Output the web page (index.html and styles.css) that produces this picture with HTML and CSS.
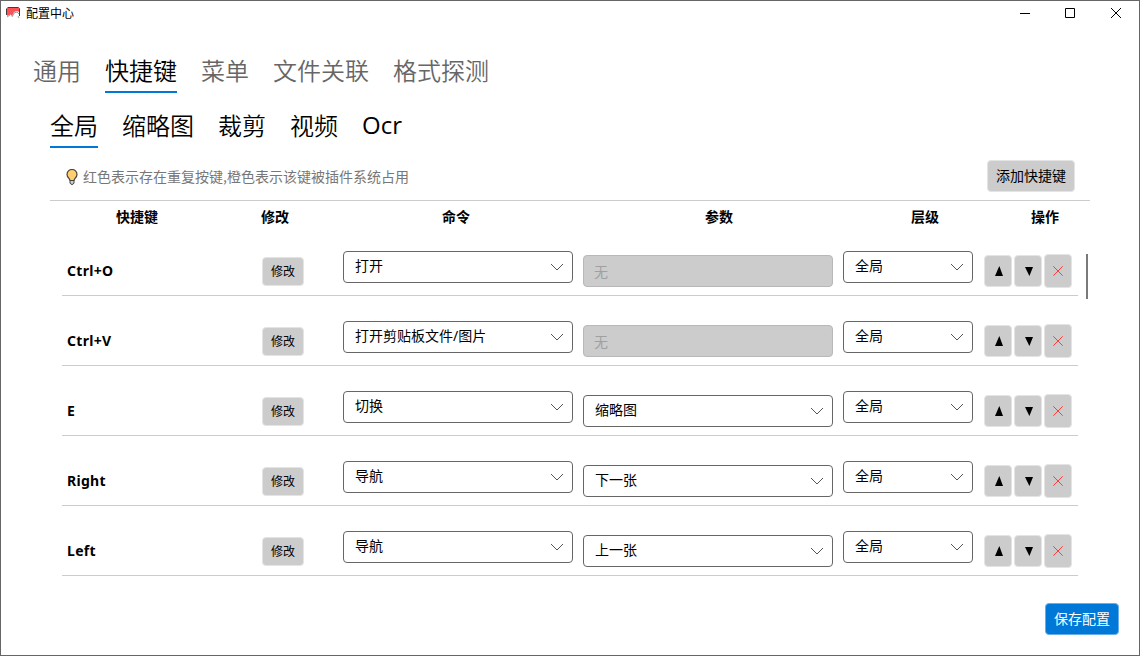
FILE: index.html
```html
<!DOCTYPE html>
<html lang="zh-CN">
<head>
<meta charset="utf-8">
<title>配置中心</title>
<link rel="stylesheet" href="styles.css">
</head>
<body>
<svg class="defs" width="0" height="0">
  <symbol id="chev" viewBox="0 0 14 8"><path d="M1 1 L7 7 L13 1" fill="none" stroke="#555" stroke-width="1"/></symbol>
  <symbol id="up" viewBox="0 0 8 10"><path d="M4.3 0 L8 10 H0 Z"/></symbol>
  <symbol id="down" viewBox="0 0 8 9"><path d="M0 0 H8 L4.4 9 Z"/></symbol>
  <symbol id="del" viewBox="0 0 10 10"><path d="M0.3 0.3 L9.7 9.7 M9.7 0.3 L0.3 9.7" fill="none" stroke="#ff3b3b" stroke-width="1"/></symbol>
</svg>
<div class="window">
  <header class="titlebar">
    <svg class="logo" width="14" height="12" viewBox="0 0 14 12"><path d="M1 1 H13 V5 L11 4 L8 5 L6 9 L4.5 7.5 L1 9 Z" fill="#fb5258"/><path d="M1.5 .5 H12.5 L13.5 1.5 V9 M.5 1.5 V8" fill="none" stroke="#49363a"/><path d="M1 10 L4 8 M6 10 L8 6 L11 5 L13 7 M12 9 L13 11" fill="none" stroke="#77706f" stroke-width=".7"/></svg>
    <span class="title">配置中心</span>
    <svg class="winctl" width="102" height="12" viewBox="0 0 102 12" fill="none" stroke="#000"><path d="M0 6.5 H10 M45.5 1.5 H54.5 V10.5 H45.5 Z M91 1 L101 11 M101 1 L91 11"/></svg>
  </header>
  <nav class="tabs main-tabs">
    <a class="tab">通用</a><a class="tab active">快捷键</a><a class="tab">菜单</a><a class="tab">文件关联</a><a class="tab">格式探测</a>
  </nav>
  <nav class="tabs sub-tabs">
    <a class="tab active">全局</a><a class="tab">缩略图</a><a class="tab">裁剪</a><a class="tab">视频</a><a class="tab latin">Ocr</a>
  </nav>
  <div class="tipbar">
    <svg width="12" height="16" viewBox="0 0 12 16"><path d="M4 11.5 C4 9.5 1 8.5 1 5.4 A5 4.9 0 0 1 11 5.4 C11 8.5 8 9.5 8 11.5 Z" fill="#ffcf70" stroke="#4a4238" stroke-width="1.2"/><path d="M4 11.5 H8 V14 L7 15.3 H5 L4 14 Z" fill="#ccc" stroke="#444"/></svg>
    <span class="tip">红色表示存在重复按键,橙色表示该键被插件系统占用</span>
    <button class="btn add">添加快捷键</button>
  </div>
  <div class="thead">
    <span>快捷键</span><span>修改</span><span>命令</span><span>参数</span><span>层级</span><span>操作</span>
  </div>
  <div class="list">
    <div class="rows">
      <div class="row">
        <b class="key">Ctrl+O</b><button class="btn edit">修改</button>
        <div class="select">打开<svg><use href="#chev"/></svg></div>
        <div class="input">无</div>
        <div class="select">全局<svg><use href="#chev"/></svg></div>
        <div class="ops"><button class="btn op"><svg class="up"><use href="#up"/></svg></button><button class="btn op"><svg class="down"><use href="#down"/></svg></button><button class="btn op del"><svg><use href="#del"/></svg></button></div>
      </div>
      <div class="row">
        <b class="key">Ctrl+V</b><button class="btn edit">修改</button>
        <div class="select">打开剪贴板文件/图片<svg><use href="#chev"/></svg></div>
        <div class="input">无</div>
        <div class="select">全局<svg><use href="#chev"/></svg></div>
        <div class="ops"><button class="btn op"><svg class="up"><use href="#up"/></svg></button><button class="btn op"><svg class="down"><use href="#down"/></svg></button><button class="btn op del"><svg><use href="#del"/></svg></button></div>
      </div>
      <div class="row">
        <b class="key">E</b><button class="btn edit">修改</button>
        <div class="select">切换<svg><use href="#chev"/></svg></div>
        <div class="select param">缩略图<svg><use href="#chev"/></svg></div>
        <div class="select">全局<svg><use href="#chev"/></svg></div>
        <div class="ops"><button class="btn op"><svg class="up"><use href="#up"/></svg></button><button class="btn op"><svg class="down"><use href="#down"/></svg></button><button class="btn op del"><svg><use href="#del"/></svg></button></div>
      </div>
      <div class="row">
        <b class="key">Right</b><button class="btn edit">修改</button>
        <div class="select">导航<svg><use href="#chev"/></svg></div>
        <div class="select param">下一张<svg><use href="#chev"/></svg></div>
        <div class="select">全局<svg><use href="#chev"/></svg></div>
        <div class="ops"><button class="btn op"><svg class="up"><use href="#up"/></svg></button><button class="btn op"><svg class="down"><use href="#down"/></svg></button><button class="btn op del"><svg><use href="#del"/></svg></button></div>
      </div>
      <div class="row">
        <b class="key">Left</b><button class="btn edit">修改</button>
        <div class="select">导航<svg><use href="#chev"/></svg></div>
        <div class="select param">上一张<svg><use href="#chev"/></svg></div>
        <div class="select">全局<svg><use href="#chev"/></svg></div>
        <div class="ops"><button class="btn op"><svg class="up"><use href="#up"/></svg></button><button class="btn op"><svg class="down"><use href="#down"/></svg></button><button class="btn op del"><svg><use href="#del"/></svg></button></div>
      </div>
    </div>
    <div class="thumb"></div>
  </div>
  <footer class="footer"><button class="btn save">保存配置</button></footer>
</div>
</body>
</html>
```
FILE: styles.css
```css
* { box-sizing: border-box; }
body { margin: 0; background: #fff; color: #000; font-family: "Noto Sans", "Noto Sans CJK SC", sans-serif; font-size: 14px; }
svg { display: block; }
.defs { display: none; }
.window { width: 1140px; height: 656px; border: 1px solid #666; display: flex; flex-direction: column; overflow: hidden; }

.titlebar { height: 25px; flex: none; display: flex; align-items: center; padding: 0 17px 2px 5px; }
.logo { margin-right: 6px; }
.title { font: 12px/24px "Noto Sans CJK SC", sans-serif; }
.winctl { margin-left: auto; }

.tabs { display: flex; gap: 24px; font: 24px/34px "Noto Sans CJK SC", sans-serif; font-weight: 350; flex: none; }
.tab { height: 40px; border-bottom: 2px solid transparent; white-space: nowrap; }
.tab.active { border-color: #0078d7; color: #000; }
.main-tabs { color: #666; padding-left: 32px; margin-top: 27px; }
.sub-tabs { padding-left: 49px; margin-top: 15px; }
.tab.latin { font-family: "Open Sans", "Noto Sans", sans-serif; font-weight: 400; }

.btn { border: 1px solid #e4e4e4; border-radius: 4px; background: #ccc; padding: 0 0 2px; color: #000; font: 14px/20px "Noto Sans CJK SC", sans-serif; display: flex; align-items: center; justify-content: center; }
.tipbar { height: 52px; flex: none; display: flex; align-items: center; margin: 0 64px 0 65px; padding-top: 5px; }
.tip { margin: -2px 0 0 5px; color: #777; font: 14px/20px "Noto Sans CJK SC", sans-serif; }
.add { width: 88px; height: 32px; margin-left: auto; margin-top: -2px; }

.thead { flex: none; margin: 0 49px; height: 26px; border-top: 1px solid #ccc; display: grid; grid-template-columns: 174px 102px 260px 266px 146px 94px; text-align: center; font: bold 14px/30px "Noto Sans CJK SC", sans-serif; }

.list { flex: none; display: flex; padding-left: 61px; height: 350px; }
.rows { width: 1016px; }
.row { height: 70px; border-bottom: 1px solid #ccc; display: grid; grid-template-columns: 200px 81px 240px 260px 141px 90px; align-items: start; }
.key { padding: 35px 0 0 5px; font-size: 14px; line-height: 20px; letter-spacing: .3px; }
.edit { width: 42px; height: 29px; margin-top: 31px; padding-bottom: 1px; font-size: 12px; }
.select, .input { height: 32px; margin-right: 10px; border: 1px solid #666; border-radius: 4px; margin-top: 25px; padding: 0 8px 2px 11px; display: flex; align-items: center; justify-content: space-between; line-height: 20px; }
.select svg { width: 14px; height: 8px; margin-top: 2px; }
.select:nth-child(5) { margin-right: 11px; }
.select.param { margin-top: 29px; }
.input { margin-top: 29px; padding: 1px 0 0 10px; background: #ccc; border-color: #b8b8b8; color: #a0a0a0; }
.ops { display: flex; gap: 2px; padding-top: 28px; align-items: center; }
.op { width: 28px; height: 32px; padding: 0; }
.op svg { width: 8px; height: 10px; margin: 0 0 0 2px; }
.op .down { height: 9px; margin-top: 0; }
.op.del { height: 34px; }
.op.del svg { width: 10px; height: 10px; margin: 0; }
.thumb { width: 2px; height: 45px; margin: 28px 0 0 8px; background: #7a7a7a; }

.footer { display: flex; justify-content: flex-end; padding: 27px 20px 0 0; }
.save { width: 74px; height: 32px; background: #0078d7; border-color: #66aee7; color: #fff; }
```
